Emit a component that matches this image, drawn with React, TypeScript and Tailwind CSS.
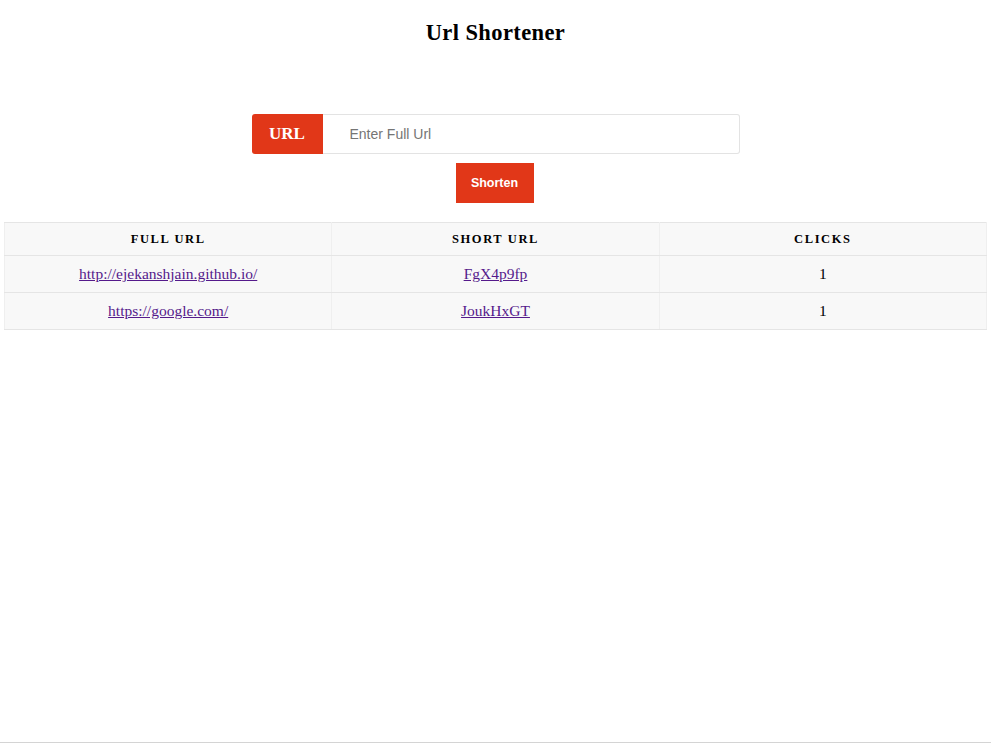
import React from "react";

const rows = [
  { full: "http://ejekanshjain.github.io/", short: "FgX4p9fp", clicks: 1 },
  { full: "https://google.com/", short: "JoukHxGT", clicks: 1 },
];

const cell = "border-y border-x border-y-[#e5e5e5] border-x-[#efefef] text-center";

export default function App() {
  return (
    <div className="h-[743px] bg-white border-b border-[#d4d4d4] font-['Liberation_Serif',serif] text-black">
      <h1 className="pt-[19px] text-center text-[22.5px] font-bold leading-[28px] tracking-[0.4px]">Url Shortener</h1>
      <div className="mt-[67px] flex justify-center">
        <div className="flex w-[488px] h-[40px]">
          <div className="w-[71px] bg-[#e13718] rounded-l-[3px] flex items-center justify-center text-white text-[17px] font-semibold">URL</div>
          <input
            className="flex-1 border border-[#e3e3e3] border-l-0 rounded-r-[3px] pl-[27px] font-['Liberation_Sans',sans-serif] text-[14px] placeholder:text-[#757575] outline-none"
            placeholder="Enter Full Url"
          />
        </div>
      </div>
      <div className="mt-[9px] flex justify-center">
        <button className="w-[78px] h-[40px] mr-[2px] bg-[#e13718] text-white font-['Liberation_Sans',sans-serif] text-[12.5px] font-bold">Shorten</button>
      </div>
      <div className="mt-[19px] mx-[4px]">
        <table className="w-full border-collapse bg-[#f8f8f8] table-fixed">
          <thead>
            <tr className="h-[33px]">
              <th className={`${cell} text-[12.5px] font-bold tracking-[1.6px] uppercase`}>Full Url</th>
              <th className={`${cell} text-[12.5px] font-bold tracking-[1.6px] uppercase`}>Short Url</th>
              <th className={`${cell} text-[12.5px] font-bold tracking-[1.6px] uppercase`}>Clicks</th>
            </tr>
          </thead>
          <tbody>
            {rows.map((r) => (
              <tr key={r.short} className="h-[37px]">
                <td className={`${cell} text-[15.5px]`}>
                  <a href="#" className="text-[#551a8b] underline">{r.full}</a>
                </td>
                <td className={`${cell} text-[15.5px]`}>
                  <a href="#" className="text-[#551a8b] underline">{r.short}</a>
                </td>
                <td className={`${cell} text-[15.5px]`}>{r.clicks}</td>
              </tr>
            ))}
          </tbody>
        </table>
      </div>
    </div>
  );
}
